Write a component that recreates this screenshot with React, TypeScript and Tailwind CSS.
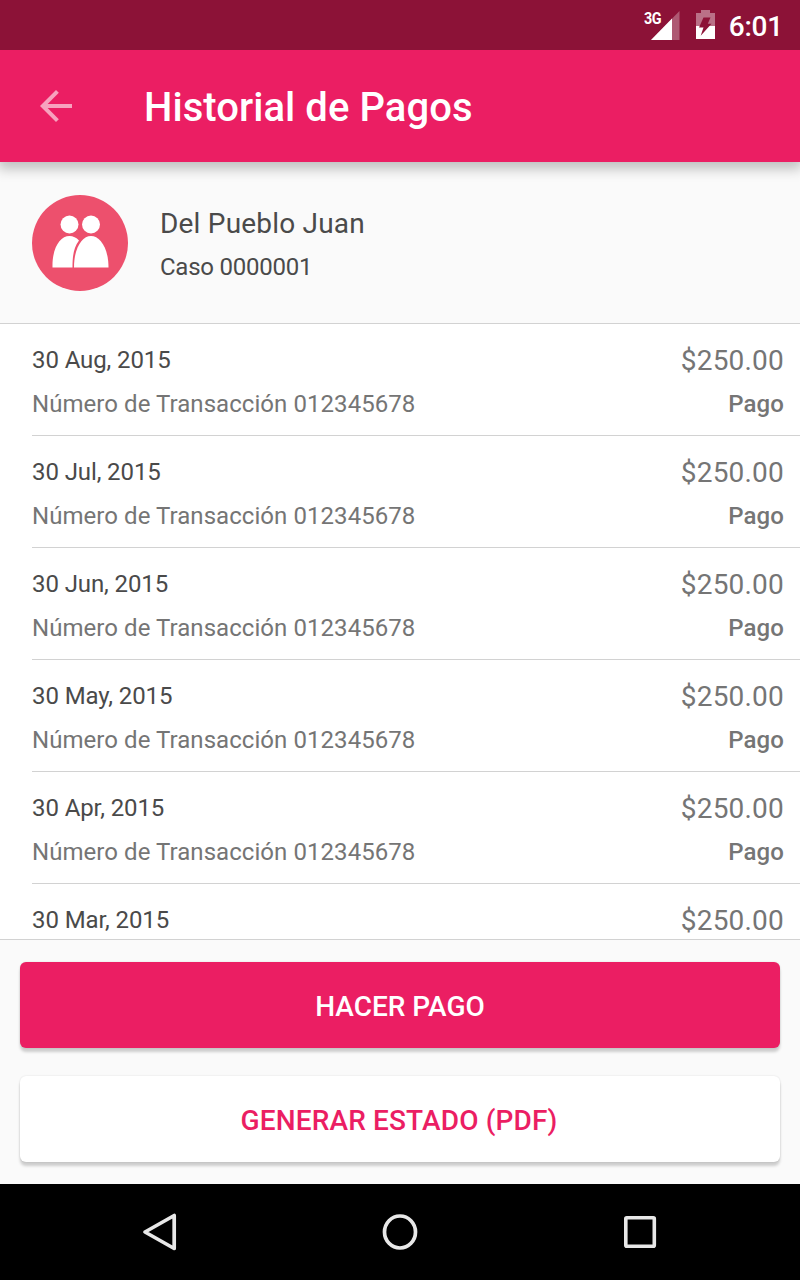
import { FC } from "react";

interface PaymentProps {
  date: string;
  amount: string;
  transaction?: string;
}

const payments: PaymentProps[] = [
  { date: "30 Aug, 2015", transaction: "012345678", amount: "$250.00" },
  { date: "30 Jul, 2015", transaction: "012345678", amount: "$250.00" },
  { date: "30 Jun, 2015", transaction: "012345678", amount: "$250.00" },
  { date: "30 May, 2015", transaction: "012345678", amount: "$250.00" },
  { date: "30 Apr, 2015", transaction: "012345678", amount: "$250.00" },
  { date: "30 Mar, 2015", amount: "$250.00" },
];

const StatusBar: FC = () => (
  <div className="relative z-20 flex h-[50px] shrink-0 items-center justify-end bg-[#8c1237] pr-[17px] text-white">
    {/* Signal */}
    <div className="relative mr-4 h-[50px] w-9">
      <svg className="h-full w-full" viewBox="0 0 36 50">
        <path d="M7 40L35.5 11v29z" fill="#fff" fillOpacity="0.3" />
        <path d="M7 40L28 18.6V40z" fill="#fff" />
      </svg>
      <span className="absolute left-0 top-[9.5px] text-base leading-[18px] font-bold tracking-[-0.5px] origin-left scale-x-90">
        3G
      </span>
    </div>
    {/* Battery */}
    <svg className="mr-[14px] h-[50px] w-[19px]" viewBox="0 0 19 50">
      <path d="M0 13h5v-3h9v3h5v13H0z" fill="#fff" fillOpacity="0.4" />
      <path d="M0 26h19v13H0z" fill="#fff" />
      <path d="M7.5 17.5h7l-2.7 6.2h3.7L4.7 35.7l2.8-8.2H3z" fill="#8c1237" />
    </svg>
    <span className="pt-[3px] text-[28px] leading-[50px] font-medium tracking-[-0.2px]">
      6:01
    </span>
  </div>
);

const Toolbar: FC = () => (
  <header className="relative z-10 flex h-28 shrink-0 items-center bg-[#eb1e63] pl-8 text-white shadow-[0_5px_12px_2px_rgba(0,0,0,0.24)]">
    <button className="h-12 w-12" aria-label="Volver">
      <svg className="h-12 w-12" viewBox="0 0 24 24">
        <path
          d="M20 11H7.83l5.59-5.59L12 4l-8 8 8 8 1.41-1.41L7.83 13H20v-2z"
          fill="#f7a2be"
        />
      </svg>
    </button>
    <h1 className="ml-16 pt-[3px] text-[40px] leading-[48px] font-medium tracking-[0.06px]">
      Historial de Pagos
    </h1>
  </header>
);

const Customer: FC = () => (
  <section className="flex h-[162px] shrink-0 items-center gap-8 border-b border-[#d2d2d2] bg-[#fafafa] pl-8 text-[#4a4a4a]">
    <svg className="h-24 w-24" viewBox="0 0 96 96">
      <circle cx="48" cy="48" r="48" fill="#ed506d" />
      <circle cx="37.5" cy="29.5" r="9" fill="#fff" />
      <circle cx="59" cy="29.5" r="9" fill="#fff" />
      <path
        d="M20.5 72.5C20 53 28 41 37.5 41c3.5 0 7 1.5 9.5 4.5-5.5 7-6.5 16-6.5 27z"
        fill="#fff"
      />
      <path d="M42 72.5C42 53 50 41 59 41s17.5 12 17.5 31.5z" fill="#fff" />
    </svg>
    <div className="pt-[5px]">
      <h2 className="text-[28px] leading-[44px] tracking-[0.2px]">
        Del Pueblo Juan
      </h2>
      <p className="text-2xl leading-[42px] tracking-[-0.25px]">Caso 0000001</p>
    </div>
  </section>
);

const Payment: FC<PaymentProps> = ({ date, transaction, amount }) => (
  <li className="ml-8 flex h-28 justify-between border-b border-[#d2d2d2] pr-4 pt-[14px] text-2xl leading-[44px] text-[#757575]">
    <div>
      <p className="tracking-[-0.1px] text-[#4a4a4a]">{date}</p>
      {transaction && (
        <p className="tracking-[0.06px]">Número de Transacción {transaction}</p>
      )}
    </div>
    <div className="text-right">
      <p className="h-11 pt-px text-[28px] leading-[44px] tracking-[0.2px]">
        {amount}
      </p>
      {transaction && <p className="font-medium tracking-[0.1px]">Pago</p>}
    </div>
  </li>
);

const NavigationBar: FC = () => (
  <nav className="flex h-24 shrink-0 items-center justify-center bg-black">
    <svg className="h-24 w-60" viewBox="0 0 240 96" fill="none">
      <path
        d="M145 48L174.2 31.5V64.5z"
        stroke="#e8e8e8"
        strokeWidth="3.7"
        strokeLinejoin="round"
      />
    </svg>
    <svg className="h-24 w-80" viewBox="0 0 320 96" fill="none">
      <ellipse cx="160" cy="48" rx="15.5" ry="16" stroke="#e8e8e8" strokeWidth="3.7" />
    </svg>
    <svg className="h-24 w-60" viewBox="0 0 240 96" fill="none">
      <rect x="65.8" y="33.8" width="28.5" height="28.5" rx="1" stroke="#e8e8e8" strokeWidth="3.6" />
    </svg>
  </nav>
);

export default function App() {
  return (
    <div className="flex h-[1280px] w-[800px] flex-col overflow-hidden bg-white font-['Roboto',sans-serif]">
      <StatusBar />
      <Toolbar />
      <Customer />
      <ul className="h-[615px] shrink-0 overflow-hidden">
        {payments.map((row) => (
          <Payment key={row.date} {...row} />
        ))}
      </ul>
      <div className="flex h-[245px] shrink-0 flex-col gap-7 border-t border-[#d2d2d2] bg-[#fafafa] px-5 pt-[22px] text-[28px] font-medium">
        <button className="h-[86px] shrink-0 rounded-md bg-[#eb1e63] pt-1 text-white shadow-[0_4px_3px_rgba(0,0,0,0.18),0_0_2px_rgba(0,0,0,0.12)]">
          HACER PAGO
        </button>
        <button className="h-[86px] shrink-0 rounded-md bg-white pt-1 pr-0.5 tracking-[0.14px] text-[#eb1e63] shadow-[0_4px_3px_rgba(0,0,0,0.18),0_0_2px_rgba(0,0,0,0.12)]">
          GENERAR ESTADO (PDF)
        </button>
      </div>
      <NavigationBar />
    </div>
  );
}
